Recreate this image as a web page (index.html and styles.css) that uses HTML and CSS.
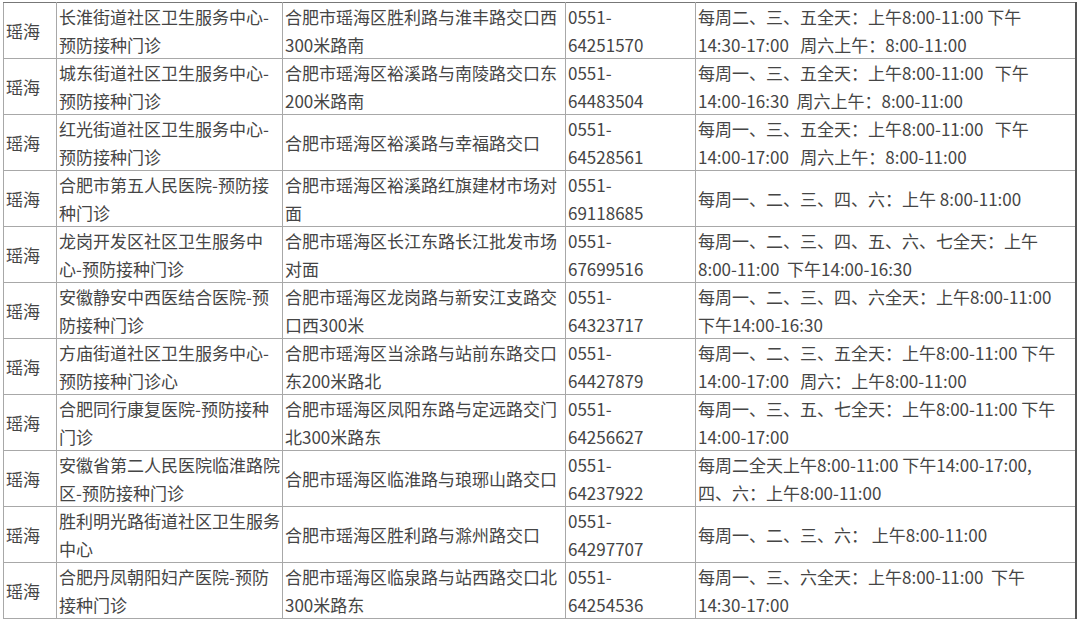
FILE: index.html
```html
<!DOCTYPE html>
<html lang="zh-CN">
<head>
<meta charset="utf-8">
<title>瑶海区预防接种门诊</title>
<link rel="stylesheet" href="styles.css">
</head>
<body>
<table class="clinics">
  <colgroup>
    <col class="c-dist">
    <col class="c-name">
    <col class="c-addr">
    <col class="c-tel">
    <col class="c-time">
  </colgroup>
  <tbody>
    <tr class="dark-top">
      <td>瑶海</td>
      <td>长淮街道社区卫生服务中心-<br>预防接种门诊</td>
      <td>合肥市瑶海区胜利路与淮丰路交口西<br>300米路南</td>
      <td>0551-<br>64251570</td>
      <td>每周二、三、五全天：上午8:00-11:00 下午<br>14:30-17:00&nbsp;&nbsp; 周六上午：8:00-11:00</td>
    </tr>
    <tr class="dark-top">
      <td>瑶海</td>
      <td>城东街道社区卫生服务中心-<br>预防接种门诊</td>
      <td>合肥市瑶海区裕溪路与南陵路交口东<br>200米路南</td>
      <td>0551-<br>64483504</td>
      <td>每周一、三、五全天：上午8:00-11:00&nbsp;&nbsp; 下午<br>14:00-16:30&nbsp; 周六上午：8:00-11:00</td>
    </tr>
    <tr>
      <td>瑶海</td>
      <td>红光街道社区卫生服务中心-<br>预防接种门诊</td>
      <td>合肥市瑶海区裕溪路与幸福路交口</td>
      <td>0551-<br>64528561</td>
      <td>每周一、三、五全天：上午8:00-11:00&nbsp;&nbsp; 下午<br>14:00-17:00&nbsp;&nbsp; 周六上午：8:00-11:00</td>
    </tr>
    <tr>
      <td>瑶海</td>
      <td>合肥市第五人民医院-预防接<br>种门诊</td>
      <td>合肥市瑶海区裕溪路红旗建材市场对<br>面</td>
      <td>0551-<br>69118685</td>
      <td>每周一、二、三、四、六：上午 8:00-11:00</td>
    </tr>
    <tr class="dark-top">
      <td>瑶海</td>
      <td>龙岗开发区社区卫生服务中<br>心-预防接种门诊</td>
      <td>合肥市瑶海区长江东路长江批发市场<br>对面</td>
      <td>0551-<br>67699516</td>
      <td>每周一、二、三、四、五、六、七全天：上午<br>8:00-11:00&nbsp; 下午14:00-16:30</td>
    </tr>
    <tr>
      <td>瑶海</td>
      <td>安徽静安中西医结合医院-预<br>防接种门诊</td>
      <td>合肥市瑶海区龙岗路与新安江支路交<br>口西300米</td>
      <td>0551-<br>64323717</td>
      <td>每周一、二、三、四、六全天：上午8:00-11:00<br>下午14:00-16:30</td>
    </tr>
    <tr>
      <td>瑶海</td>
      <td>方庙街道社区卫生服务中心-<br>预防接种门诊心</td>
      <td>合肥市瑶海区当涂路与站前东路交口<br>东200米路北</td>
      <td>0551-<br>64427879</td>
      <td>每周一、二、三、五全天：上午8:00-11:00 下午<br>14:00-17:00&nbsp;&nbsp; 周六：上午8:00-11:00</td>
    </tr>
    <tr>
      <td>瑶海</td>
      <td>合肥同行康复医院-预防接种<br>门诊</td>
      <td>合肥市瑶海区凤阳东路与定远路交门<br>北300米路东</td>
      <td>0551-<br>64256627</td>
      <td>每周一、三、五、七全天：上午8:00-11:00 下午<br>14:00-17:00</td>
    </tr>
    <tr>
      <td>瑶海</td>
      <td>安徽省第二人民医院临淮路院<br>区-预防接种门诊</td>
      <td>合肥市瑶海区临淮路与琅琊山路交口</td>
      <td>0551-<br>64237922</td>
      <td>每周二全天上午8:00-11:00 下午14:00-17:00,<br>四、六：上午8:00-11:00</td>
    </tr>
    <tr class="dark-top">
      <td>瑶海</td>
      <td>胜利明光路街道社区卫生服务<br>中心</td>
      <td>合肥市瑶海区胜利路与滁州路交口</td>
      <td>0551-<br>64297707</td>
      <td>每周一、二、三、六： 上午8:00-11:00</td>
    </tr>
    <tr>
      <td>瑶海</td>
      <td>合肥丹凤朝阳妇产医院-预防<br>接种门诊</td>
      <td>合肥市瑶海区临泉路与站西路交口北<br>300米路东</td>
      <td>0551-<br>64254536</td>
      <td>每周一、三、六全天：上午8:00-11:00&nbsp; 下午<br>14:30-17:00</td>
    </tr>
  </tbody>
</table>
</body>
</html>
```

FILE: styles.css
```css
html, body {
  margin: 0;
  padding: 0;
  background: #ffffff;
}

body {
  padding: 2px 0 0 3px;
}

.clinics {
  border-collapse: collapse;
  table-layout: fixed;
  width: 1072px;
  font-family: "Microsoft YaHei", "Noto Sans CJK SC", "Noto Sans", sans-serif;
  font-size: 17px;
  line-height: 27.5px;
  color: #454545;
}

.c-dist { width: 53px; }
.c-name { width: 226px; }
.c-addr { width: 283px; }
.c-tel  { width: 130px; }
.c-time { width: 380px; }

.clinics td {
  height: 56px;
  padding: 0 0 0 2px;
  border: 1px solid #a8a8a8;
  vertical-align: middle;
  white-space: nowrap;
  overflow: hidden;
  box-sizing: border-box;
}

.clinics td:last-child {
  border-right: 2px solid #555555;
}

.clinics tr.dark-top td {
  border-top-color: #555555;
}

.clinics tr:first-child td {
  border-top-color: #777777;
}
```
